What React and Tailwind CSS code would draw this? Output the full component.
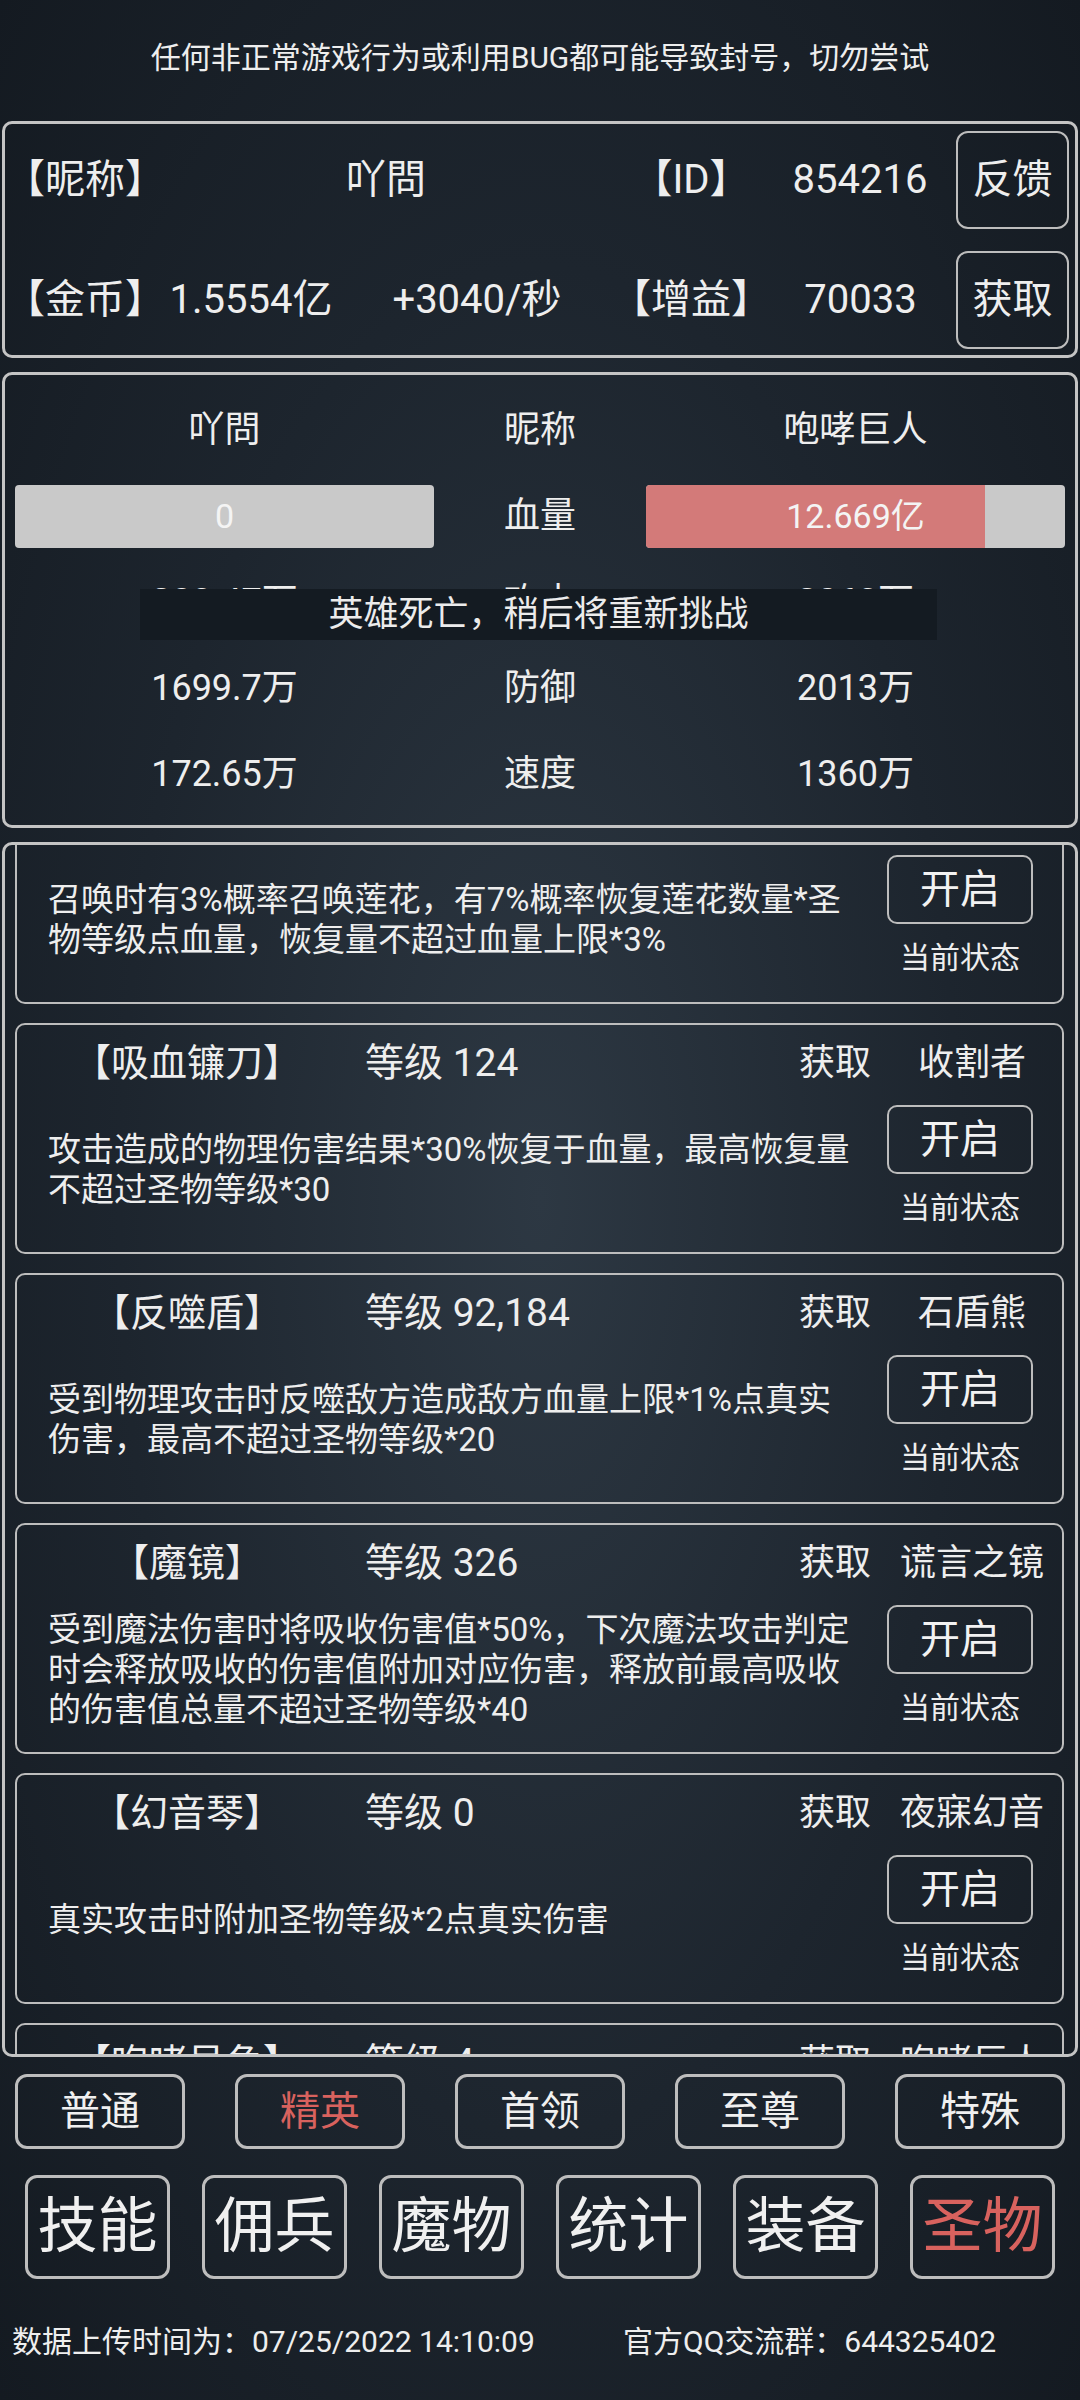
import React from "react";

const relics = [
  {
    name: "【青莲台】",
    level: "58",
    owner: "莲花仙子",
    desc: "召唤时有3%概率召唤莲花，有7%概率恢复莲花数量*圣物等级点血量，恢复量不超过血量上限*3%",
  },
  {
    name: "【吸血镰刀】",
    level: "124",
    owner: "收割者",
    desc: "攻击造成的物理伤害结果*30%恢复于血量，最高恢复量不超过圣物等级*30",
  },
  {
    name: "【反噬盾】",
    level: "92,184",
    owner: "石盾熊",
    desc: "受到物理攻击时反噬敌方造成敌方血量上限*1%点真实伤害，最高不超过圣物等级*20",
  },
  {
    name: "【魔镜】",
    level: "326",
    owner: "谎言之镜",
    desc: "受到魔法伤害时将吸收伤害值*50%，下次魔法攻击判定时会释放吸收的伤害值附加对应伤害，释放前最高吸收的伤害值总量不超过圣物等级*40",
  },
  {
    name: "【幻音琴】",
    level: "0",
    owner: "夜寐幻音",
    desc: "真实攻击时附加圣物等级*2点真实伤害",
  },
  {
    name: "【咆哮号角】",
    level: "4",
    owner: "咆哮巨人",
    desc: "攻击时有概率发出咆哮，降低敌方攻击力*圣物等级",
  },
];

const ranks = ["普通", "精英", "首领", "至尊", "特殊"];
const menus = ["技能", "佣兵", "魔物", "统计", "装备", "圣物"];

const stats = [
  ["283.47万", "攻击", "2063万"],
  ["1699.7万", "防御", "2013万"],
  ["172.65万", "速度", "1360万"],
];

function Relic({ name, level, owner, desc }) {
  return (
    <div className="h-[231px] shrink-0 rounded-[10px] border-2 border-[#bdbdbd] flex flex-col">
      <div className="h-[76px] shrink-0 flex items-center text-[36px] leading-none whitespace-nowrap">
        <div className="w-[340px] flex justify-center text-[38px]">{name}</div>
        <div className="flex-1 pl-[8px] text-[39px]">等级 {level}</div>
        <div className="w-[110px] text-center">获取</div>
        <div className="w-[144px] ml-[10px] mr-[18px] flex justify-center">{owner}</div>
      </div>
      <div className="h-[138px] shrink-0 flex items-center pl-[31px] pr-[29px] gap-[30px]">
        <p className="flex-1 text-[33px] leading-[40px]">{desc}</p>
        <div className="w-[146px] pb-[9px] flex flex-col items-center gap-[16px]">
          <button className="w-[146px] h-[69px] rounded-[10px] border-2 border-[#bdbdbd] text-[40px] leading-none text-[#f2f2f2]">
            开启
          </button>
          <span className="text-[30px] leading-[36px] whitespace-nowrap">当前状态</span>
        </div>
      </div>
    </div>
  );
}

export default function App() {
  return (
    <div className="w-[1080px] h-[2400px] overflow-hidden text-[#eeeeee] font-[Roboto,'Noto_Sans_CJK_SC',sans-serif] bg-[radial-gradient(ellipse_at_center,_#2d3843_0%,_#1d252e_55%,_#141a21_100%)]">
      {/* notice */}
      <div className="h-[121px] pb-[5px] flex items-center justify-center text-[30px] leading-none">
        任何非正常游戏行为或利用BUG都可能导致封号，切勿尝试
      </div>

      {/* player info */}
      <div className="mx-[2px] rounded-[10px] border-[3px] border-[#c4c4c4] pt-[7px] pb-[6px] flex flex-col gap-[22px] text-[40px] leading-none whitespace-nowrap">
        <div className="h-[98px] flex items-center">
          <div className="w-[160px]">【昵称】</div>
          <div className="w-[442px] flex justify-center">吖問</div>
          <div className="w-[168px] flex justify-center">【ID】</div>
          <div className="w-[170px] flex justify-center">854216</div>
          <button className="ml-[11px] w-[113px] h-[98px] rounded-[12px] border-2 border-[#bdbdbd]">反馈</button>
        </div>
        <div className="h-[98px] flex items-center">
          <div className="w-[160px]">【金币】</div>
          <div className="w-[172px] flex justify-center">1.5554亿</div>
          <div className="w-[280px] flex justify-center">+3040/秒</div>
          <div className="w-[148px] flex justify-center">【增益】</div>
          <div className="w-[191px] flex justify-center">70033</div>
          <button className="w-[113px] h-[98px] rounded-[12px] border-2 border-[#bdbdbd]">获取</button>
        </div>
      </div>

      {/* battle */}
      <div className="relative mt-[14px] mx-[2px] rounded-[10px] border-[3px] border-[#c4c4c4] px-[10px] pt-[12px] pb-[8px] text-[36px] leading-none whitespace-nowrap">
        <div className="grid grid-cols-[419px_212px_419px]">
          <div className="h-[86px] flex items-center justify-center">吖問</div>
          <div className="h-[86px] flex items-center justify-center">昵称</div>
          <div className="h-[86px] flex items-center justify-center">咆哮巨人</div>

          <div className="h-[86px] flex items-center">
            <div className="w-full h-[63px] rounded-[4px] bg-[#c9c9c9] flex items-center justify-center text-[34px] text-[#f4f4f4]">
              0
            </div>
          </div>
          <div className="h-[86px] flex items-center justify-center">血量</div>
          <div className="h-[86px] flex items-center">
            <div className="w-full h-[63px] rounded-[4px] bg-[#c9c9c9] grid">
              <div className="[grid-area:1/1] w-[81%] h-full rounded-l-[4px] bg-[#d37a79]"></div>
              <div className="[grid-area:1/1] flex items-center justify-center text-[34px] text-[#f4f4f4]">
                12.669亿
              </div>
            </div>
          </div>

          {stats.map((row) =>
            row.map((cell, i) => (
              <div key={row[1] + i} className="h-[86px] flex items-center justify-center">
                {cell}
              </div>
            ))
          )}
        </div>
        <div className="absolute z-10 left-[135px] top-[214px] w-[797px] h-[51px] bg-[#141b22] flex items-center justify-center text-[35px] text-[#ececec]">
          英雄死亡，稍后将重新挑战
        </div>
      </div>

      {/* relic list */}
      <div className="mt-[14px] mx-[2px] h-[1215px] rounded-[10px] border-[3px] border-[#c4c4c4] overflow-hidden pl-[10px] pr-[11px]">
        <div className="-mt-[72px] flex flex-col gap-[19px]">
          {relics.map((r) => (
            <Relic key={r.name} {...r} />
          ))}
        </div>
      </div>

      {/* rank tabs */}
      <div className="mt-[17px] pl-[15px] flex gap-[50px]">
        {ranks.map((t) => (
          <button
            key={t}
            className={`w-[170px] h-[75px] rounded-[12px] border-[3px] border-[#bdbdbd] text-[40px] leading-none ${
              t === "精英" ? "text-[#d8625e]" : "text-[#f0f0f0]"
            }`}
          >
            {t}
          </button>
        ))}
      </div>

      {/* main menu */}
      <div className="mt-[26px] pl-[25px] flex gap-[32px]">
        {menus.map((t) => (
          <button
            key={t}
            className={`w-[145px] h-[104px] rounded-[12px] border-[3px] border-[#bdbdbd] text-[60px] leading-none ${
              t === "圣物" ? "text-[#d8625e]" : "text-[#f0f0f0]"
            }`}
          >
            {t}
          </button>
        ))}
      </div>

      {/* footer */}
      <div className="mt-[43px] h-[40px] pl-[12px] flex items-center text-[30px] leading-none whitespace-nowrap">
        <span className="w-[611px]">数据上传时间为：07/25/2022 14:10:09</span>
        <span>官方QQ交流群：644325402</span>
      </div>
    </div>
  );
}
